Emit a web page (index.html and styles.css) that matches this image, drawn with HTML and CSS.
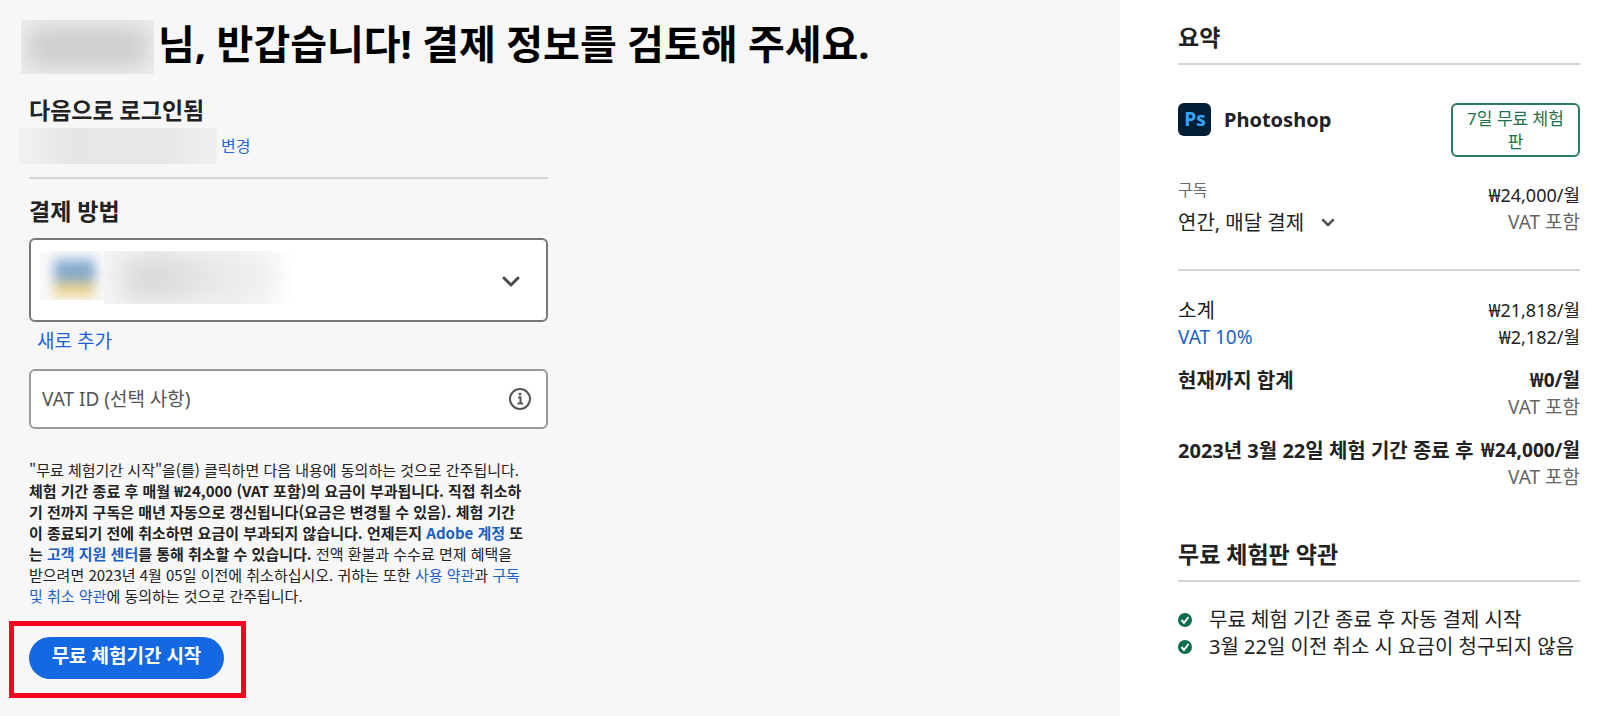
FILE: index.html
```html
<!DOCTYPE html>
<html lang="ko">
<head>
    <meta charset="UTF-8">
    <meta name="viewport" content="width=device-width, initial-scale=1.0">
    <title>결제 정보</title>
    <link rel="stylesheet" href="styles.css">
</head>
<body>
    <main class="checkout">
        <h1 class="greeting"><span class="hidden-name"></span>님, 반갑습니다! 결제 정보를 검토해 주세요.</h1>
        <form class="payment">
            <h2>다음으로 로그인됨</h2>
            <div class="account">
                <span class="hidden-email"></span>
                <a href="#">변경</a>
            </div>
            <h2><label for="method">결제 방법</label></h2>
            <div class="method">
                <select id="method" name="method">
                    <option value="card"></option>
                </select>
                <span class="hidden-card"><span class="card-logo"></span><span class="card-number"></span></span>
                <svg class="chevron" width="18" height="12" viewBox="0 0 18 12" fill="none" stroke="#4b4b4b" stroke-width="3" stroke-linecap="round" stroke-linejoin="round"><path d="M2 2l7 7 7-7"/></svg>
            </div>
            <a class="add-new" href="#">새로 추가</a>
            <div class="vat">
                <input type="text" name="vat" placeholder="VAT ID (선택 사항)" aria-label="VAT ID (선택 사항)">
                <button type="button" class="info" aria-label="VAT ID">
                    <svg width="24" height="24" viewBox="0 0 24 24" fill="none" stroke="#555" stroke-width="2"><circle cx="12" cy="12" r="10"/><path d="M10 10.500h2.500V16M9.500 16.500h5.500"/><circle cx="12" cy="7" r="1.500" fill="#555" stroke="none"/></svg>
                </button>
            </div>
            <p class="terms">
                "무료 체험기간 시작"을(를) 클릭하면 다음 내용에 동의하는 것으로 간주됩니다.<br>
                <b>체험 기간 종료 후 매월 ₩24,000 (VAT 포함)의 요금이 부과됩니다. 직접 취소하<br>기 전까지 구독은 매년 자동으로 갱신됩니다(요금은 변경될 수 있음). 체험 기간<br>이 종료되기 전에 취소하면 요금이 부과되지 않습니다. 언제든지 <a href="#">Adobe 계정</a> 또<br>는 <a href="#">고객 지원 센터</a>를 통해 취소할 수 있습니다.</b> 전액 환불과 수수료 면제 혜택을<br>
                받으려면 2023년 4월 05일 이전에 취소하십시오. 귀하는 또한 <a href="#">사용 약관</a>과 <a href="#">구독<br>및 취소 약관</a>에 동의하는 것으로 간주됩니다.
            </p>
            <div class="highlight">
                <button type="submit" class="start">무료 체험기간 시작</button>
            </div>
        </form>
    </main>
    <aside class="summary">
        <h2>요약</h2>
        <div class="product">
            <svg width="33" height="33" viewBox="0 0 33 33"><rect width="33" height="33" rx="6" fill="#001e36"/><text class="ps" x="17" y="23" text-anchor="middle">Ps</text></svg>
            <h3>Photoshop</h3>
            <span class="badge">7일 무료 체험<br>판</span>
        </div>
        <div class="plan">
            <div class="plan-name">
                <label for="plan">구독</label>
                <div class="plan-select">
                    <select id="plan" name="plan">
                        <option>연간, 매달 결제</option>
                    </select>
                    <svg width="14" height="10" viewBox="0 0 14 10" fill="none" stroke="#555" stroke-width="2.500" stroke-linecap="round" stroke-linejoin="round"><path d="M2 2l5 5 5-5"/></svg>
                </div>
            </div>
            <div class="price">₩24,000/월<small>VAT 포함</small></div>
        </div>
        <div class="row"><span>소계</span><span class="price">₩21,818/월</span></div>
        <div class="row"><a href="#">VAT 10%</a><span class="price">₩2,182/월</span></div>
        <div class="row total"><b>현재까지 합계</b><span class="price"><b>₩0/월</b><small>VAT 포함</small></span></div>
        <div class="row total"><b>2023년 3월 22일 체험 기간 종료 후</b><span class="price"><b>₩24,000/월</b><small>VAT 포함</small></span></div>
        <h2 class="trial-title">무료 체험판 약관</h2>
        <ul class="trial">
            <li><svg width="14" height="14" viewBox="0 0 14 14"><circle cx="7" cy="7" r="7" fill="#0b6e4a"/><path d="M3.500 7l2.500 3 4.500-6" fill="none" stroke="#fff" stroke-width="2"/></svg>무료 체험 기간 종료 후 자동 결제 시작</li>
            <li><svg width="14" height="14" viewBox="0 0 14 14"><circle cx="7" cy="7" r="7" fill="#0b6e4a"/><path d="M3.500 7l2.500 3 4.500-6" fill="none" stroke="#fff" stroke-width="2"/></svg>3월 22일 이전 취소 시 요금이 청구되지 않음</li>
        </ul>
    </aside>
</body>
</html>
```
FILE: styles.css
```css
* {
    box-sizing: border-box;
}
body {
    margin: 0;
    min-height: 100vh;
    display: grid;
    grid-template-columns: 7fr 3fr;
    font-family: "Noto Sans", "Noto Sans CJK KR", sans-serif;
    font-size: 20px;
    line-height: 27px;
    color: #222;
    background-color: #fff;
}
h1, h2, h3, p, ul {
    margin: 0;
    padding: 0;
}
a {
    color: #1a5fc4;
    text-decoration: none;
}
select, input, button {
    font: inherit;
    color: inherit;
}
select {
    appearance: none;
    border: none;
    background: none;
    padding: 0;
}
h2 {
    font-size: 23px;
    line-height: 30px;
}
.checkout {
    padding-top: 14px;
    background-color: #f7f7f7;
}
.greeting {
    display: flex;
    align-items: flex-end;
    gap: 4px;
    padding-left: 21px;
    font-size: 40px;
    line-height: 60px;
    color: #000;
}
.hidden-name {
    width: 133px;
    height: 54px;
    background-color: #cecece;
    box-shadow: inset 0 0 22px 6px #efefef;
}
.payment {
    width: 548px;
    max-width: 100%;
    padding: 21px 0 0 29px;
}
.account {
    display: flex;
    align-items: center;
    gap: 4px;
    height: 51px;
    margin: 3px 0 17px;
    padding-bottom: 13px;
    border-bottom: 2px solid #d5d5d5;
    font-size: 16px;
}
.account a {
    color: #2c67d0;
}
.hidden-email {
    width: 198px;
    height: 36px;
    margin-left: -10px;
    background: linear-gradient(90deg, #f2f2f2, #e6e6e7 25%, #e7e7e8 75%, #f0f0f0);
}
.method {
    position: relative;
    height: 84px;
    margin-top: 12px;
}
.method select {
    width: 100%;
    height: 100%;
    border: 2px solid #777;
    border-radius: 6px;
    background-color: #fff;
}
.hidden-card {
    position: absolute;
    left: 11px;
    top: 13px;
    display: flex;
    pointer-events: none;
}
.card-logo {
    width: 64px;
    height: 49px;
    padding: 8px 9px 0 14px;
    overflow: hidden;
    background-color: #f9f9fa;
}
.card-logo::before {
    content: "";
    display: block;
    height: 38px;
    background: linear-gradient(#8fb3d6, #7fa5cb 45%, #ecd391 75%, #f0d890);
    filter: blur(6px);
}
.card-number {
    width: 187px;
    height: 53px;
    padding: 4px 16px 4px 18px;
    overflow: hidden;
    background: linear-gradient(90deg, #f5f5f6, #f3f3f3 70%, #fff);
}
.card-number::before {
    content: "";
    display: block;
    height: 45px;
    background: linear-gradient(90deg, #dadadc 30%, #e8e8e8 60%, #f0f0f0);
    filter: blur(12px);
}
.chevron {
    position: absolute;
    right: 28px;
    top: 38px;
    pointer-events: none;
}
.add-new {
    display: block;
    padding: 6px 8px 14px;
    color: #1b62dc;
    font-size: 19px;
}
.vat {
    display: flex;
    align-items: center;
    height: 60px;
    padding-right: 14px;
    border: 2px solid #999;
    border-radius: 6px;
    background-color: #fff;
}
.vat input {
    flex: 1;
    min-width: 0;
    padding: 0 11px;
    border: none;
    background: none;
    font-size: 19px;
}
.vat input::placeholder {
    color: #555;
    opacity: 1;
}
.info {
    display: flex;
    padding: 0;
    border: none;
    background: none;
}
.terms {
    margin: 30px 0 15px;
    font-family: "Noto Sans CJK KR", sans-serif;
    font-size: 15px;
    line-height: 21px;
    white-space: nowrap;
}
.highlight {
    width: 237px;
    margin-left: -20px;
    padding: 11px 15px 14px;
    border: 5px solid #fc0020;
}
.start {
    display: block;
    width: 195px;
    height: 42px;
    padding: 0 0 4px;
    border: none;
    border-radius: 21px;
    background-color: #1469e2;
    color: #fff;
    font-size: 19px;
    font-weight: bold;
    white-space: nowrap;
}
.summary {
    padding: 22px 20px 0 58px;
}
.summary h2 {
    padding-bottom: 11px;
    border-bottom: 2px solid #d5d5d5;
}
.product {
    display: flex;
    align-items: flex-start;
    padding-top: 38px;
}
.ps {
    font-family: "Open Sans", sans-serif;
    font-size: 19px;
    font-weight: bold;
    fill: #31a8ff;
}
.product h3 {
    flex: 1;
    padding-left: 13px;
    font-size: 20px;
    line-height: 33px;
}
.badge {
    width: 129px;
    padding: 2px 0;
    border: 2px solid #2d7d5c;
    border-radius: 6px;
    color: #1d7050;
    font-size: 17px;
    line-height: 23px;
    text-align: center;
}
.plan {
    display: flex;
    justify-content: space-between;
    margin-bottom: 26px;
    padding: 20px 0 32px;
    border-bottom: 2px solid #d5d5d5;
}
.plan-name label {
    display: block;
    color: #6b6b6b;
    font-size: 16px;
}
.plan-select {
    display: flex;
    align-items: center;
    gap: 16px;
    height: 33px;
    padding-top: 4px;
}
.plan .price {
    padding-top: 5px;
}
.row {
    display: flex;
    justify-content: space-between;
    white-space: nowrap;
}
.row a {
    font-size: 19px;
}
.total {
    padding-top: 16px;
}
.price {
    font-size: 18px;
    text-align: right;
}
.price b {
    font-size: 19px;
}
.price small {
    display: block;
    color: #666;
    font-size: 19px;
}
.trial-title {
    padding-top: 48px;
}
.trial {
    padding-top: 24px;
    list-style: none;
    white-space: nowrap;
}
.trial li {
    display: flex;
    align-items: center;
    gap: 17px;
}
```
